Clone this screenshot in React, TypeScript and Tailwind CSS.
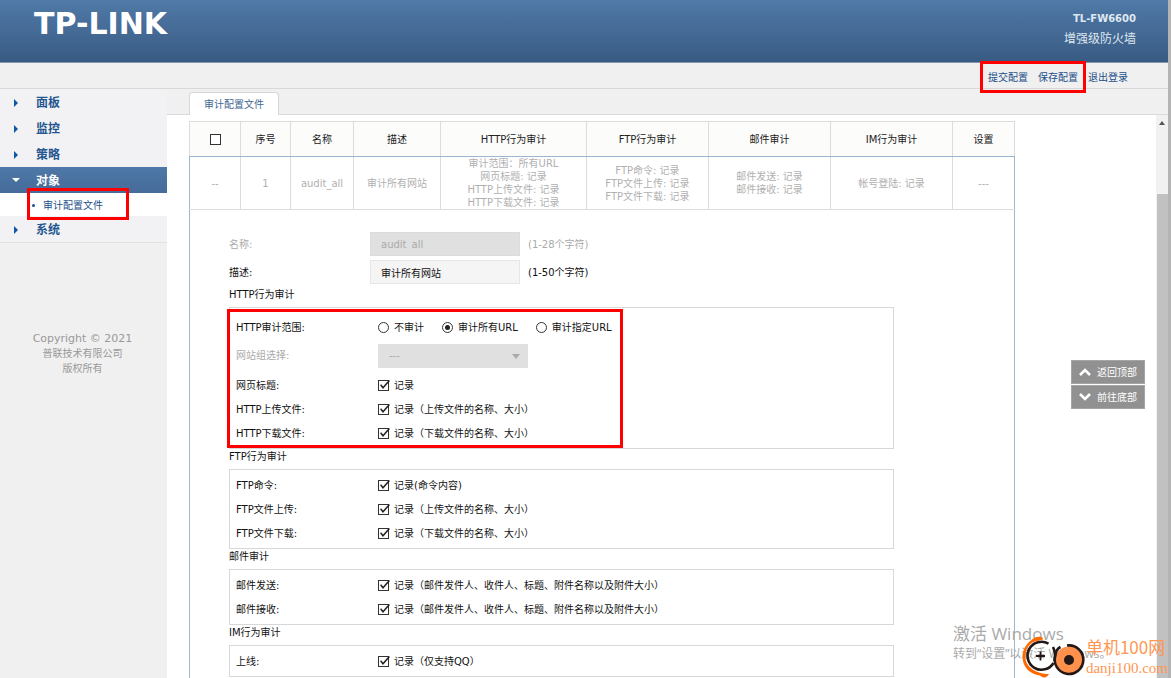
import React, { useState } from 'react';

interface Row {
  id: string;
  label: string;
  text: string;
}

const httpRows: Row[] = [
  { id: 'title', label: '网页标题:', text: '记录' },
  { id: 'http-up', label: 'HTTP上传文件:', text: '记录（上传文件的名称、大小）' },
  { id: 'http-down', label: 'HTTP下载文件:', text: '记录（下载文件的名称、大小）' },
];

const ftpRows: Row[] = [
  { id: 'ftp-cmd', label: 'FTP命令:', text: '记录(命令内容)' },
  { id: 'ftp-up', label: 'FTP文件上传:', text: '记录（上传文件的名称、大小）' },
  { id: 'ftp-down', label: 'FTP文件下载:', text: '记录（下载文件的名称、大小）' },
];

const mailRows: Row[] = [
  { id: 'mail-send', label: '邮件发送:', text: '记录（邮件发件人、收件人、标题、附件名称以及附件大小）' },
  { id: 'mail-recv', label: '邮件接收:', text: '记录（邮件发件人、收件人、标题、附件名称以及附件大小）' },
];

const imRows: Row[] = [{ id: 'im-online', label: '上线:', text: '记录（仅支持QQ）' }];

const scopes = ['不审计', '审计所有URL', '审计指定URL'];

const Checkbox: React.FC<{ id: string; checked: boolean; onChange: () => void; label?: string }> = ({ id, checked, onChange, label }) => (
  <span className="relative inline-flex size-[11px] shrink-0">
    <input id={id} type="checkbox" checked={checked} onChange={onChange} aria-label={label} className="appearance-none size-[11px] border border-[#333] bg-white" />
    {checked && (
      <svg viewBox="0 0 13 12" className="absolute left-0 -top-px w-[13px] h-3 pointer-events-none" fill="none" stroke="#222" strokeWidth="1.5">
        <path d="M2.600 5.800 L5 8.800 L11.400 1.600" />
      </svg>
    )}
  </span>
);

const CheckRow: React.FC<{ row: Row }> = ({ row }) => {
  const [checked, setChecked] = useState(true);
  return (
    <div className="flex items-center h-6">
      <label htmlFor={row.id} className="w-[142px] shrink-0">{row.label}</label>
      <Checkbox id={row.id} checked={checked} onChange={() => setChecked(!checked)} />
      <span className="ml-[5px]">{row.text}</span>
    </div>
  );
};

const Section: React.FC<{ title: string; rows: Row[]; children?: React.ReactNode }> = ({ title, rows, children }) => (
  <section>
    <h3 className="h-5 leading-4">{title}</h3>
    <div className="relative border border-[#d8d8d8] px-[6px] py-[3px]">
      {children}
      {rows.map(r => <CheckRow key={r.id} row={r} />)}
    </div>
  </section>
);

const NavItem: React.FC<{ text: string; open?: boolean }> = ({ text, open }) => (
  <a href="#" className={`flex items-center h-[26px] pt-[2px] pl-3 text-xs font-bold ${open ? 'bg-linear-to-b from-[#4e78a8] to-[#456b99] text-white' : 'bg-[#f2f2f4] text-[#24568f]'}`}>
    <svg viewBox="0 0 8 8" className="size-2 mr-4" fill={open ? '#fff' : '#0d58a6'}>
      {open ? <path d="M0 1h8L4 5z" /> : <path d="M2 0v8l4-4z" />}
    </svg>
    {text}
  </a>
);

const Th: React.FC<{ children: React.ReactNode }> = ({ children }) => (
  <th className="h-[35px] border border-[#dcdcdc] border-b-[#9db6d0] bg-[#fcfcfb] font-normal text-[#222]">{children}</th>
);

const Td: React.FC<{ children: React.ReactNode }> = ({ children }) => (
  <td className="h-[53px] border border-[#dcdcdc] first:border-l-[#9db6d0] last:border-r-[#9db6d0] text-center leading-[13px]">{children}</td>
);

const App: React.FC = () => {
  const [scope, setScope] = useState(1);
  const [all, setAll] = useState(false);
  const [desc, setDesc] = useState('审计所有网站');

  return (
    <div className="h-screen flex flex-col overflow-hidden relative bg-white border-r-[3px] border-[#b4b4b4] text-[10px] text-[#111] font-['DejaVu_Sans','Noto_Sans_CJK_SC',sans-serif]">
      <header className="h-[63px] shrink-0 flex justify-between pl-[34px] pr-8 bg-linear-to-b from-[#517aa8] to-[#385b83] border-b border-[#8195ac] text-white">
        <div className="text-[30px] leading-[48px] font-bold">TP-LINK</div>
        <div className="pt-[9px] text-right text-[#dfe8f1]">
          <div className="font-bold leading-5">TL-FW6600</div>
          <div className="text-xs leading-5">增强级防火墙</div>
        </div>
      </header>

      <div className="h-[26px] shrink-0 flex justify-end items-center pr-10 bg-[#f0f0f0] border-b border-[#d8d8d8] text-[#1c4f8a]">
        <div className="relative flex gap-[10px] pt-1 mr-[10px]">
          <a href="#">提交配置</a>
          <a href="#">保存配置</a>
          <div className="absolute z-10 -left-2 -right-2 -top-[5px] h-8 border-3 border-[#f00] pointer-events-none" />
        </div>
        <a href="#" className="pt-1">退出登录</a>
      </div>

      <div className="flex-1 min-h-0 flex">
        <aside className="w-[167px] shrink-0 bg-[#f0f0f0]">
          <nav className="border-b border-[#e2e2e2]">
            <NavItem text="面板" />
            <NavItem text="监控" />
            <NavItem text="策略" />
            <NavItem text="对象" open />
            <div className="relative bg-white h-[23px] flex items-center pl-8 pt-px">
              <span className="size-[3px] rounded-full bg-[#1c4f8a] mr-2" />
              <a href="#" className="text-[#1c4f8a]">审计配置文件</a>
              <div className="absolute left-[27px] -top-[5px] w-[102px] h-8 border-3 border-[#f00] pointer-events-none" />
            </div>
            <NavItem text="系统" />
          </nav>
          <div className="mt-[88px] pr-[2px] text-center text-[#999] leading-[15px]">
            <p className="text-[11px]">Copyright © 2021</p>
            <p>普联技术有限公司</p>
            <p>版权所有</p>
          </div>
        </aside>

        <main className="relative flex-1 min-w-0 flex flex-col">
          <div className="h-[26px] shrink-0 flex items-end pl-[22px] bg-[#f0f0f0] border-b border-[#dadada]">
            <button className="h-[23px] w-[90px] -mb-px rounded-t border border-b-0 border-[#d6d6d6] bg-white text-[#3f6690]">审计配置文件</button>
          </div>

          <div className="flex-1 min-h-0 flex">
            <div className="flex-1 min-w-0 pl-[22px] pt-[6px] overflow-hidden">
              <div className="max-w-[826px]">
                <table className="w-full table-fixed border-collapse text-[#b0b0b0]">
                  <colgroup>
                    <col className="w-[51px]" />
                    <col className="w-[50px]" />
                    <col className="w-[63px]" />
                    <col className="w-[87px]" />
                    <col className="w-[146px]" />
                    <col className="w-[122px]" />
                    <col className="w-[122px]" />
                    <col className="w-[122px]" />
                    <col className="w-[62px]" />
                  </colgroup>
                  <thead>
                    <tr>
                      <Th><span className="flex justify-center"><Checkbox id="all" label="全选" checked={all} onChange={() => setAll(!all)} /></span></Th>
                      <Th>序号</Th>
                      <Th>名称</Th>
                      <Th>描述</Th>
                      <Th>HTTP行为审计</Th>
                      <Th>FTP行为审计</Th>
                      <Th>邮件审计</Th>
                      <Th>IM行为审计</Th>
                      <Th>设置</Th>
                    </tr>
                  </thead>
                  <tbody>
                    <tr>
                      <Td>--</Td>
                      <Td>1</Td>
                      <Td>audit_all</Td>
                      <Td>审计所有网站</Td>
                      <Td>审计范围：所有URL<br />网页标题: 记录<br />HTTP上传文件: 记录<br />HTTP下载文件: 记录</Td>
                      <Td>FTP命令: 记录<br />FTP文件上传: 记录<br />FTP文件下载: 记录</Td>
                      <Td>邮件发送: 记录<br />邮件接收: 记录</Td>
                      <Td>帐号登陆: 记录</Td>
                      <Td>---</Td>
                    </tr>
                  </tbody>
                </table>

                <form className="border-x border-[#9db6d0] pl-[39px] pr-[120px] pt-[22px] pb-10">
                  <div className="flex items-center h-6 mb-1 text-[#aaa]">
                    <label htmlFor="name" className="w-[141px]">名称:</label>
                    <input id="name" disabled value="audit_all" className="w-[150px] h-6 px-[10px] leading-4 bg-[#e0e0e0] border border-[#dcdcdc]" />
                    <span className="ml-2">(1-28个字符)</span>
                  </div>
                  <div className="flex items-center h-6 mb-[3px]">
                    <label htmlFor="desc" className="w-[141px]">描述:</label>
                    <input id="desc" value={desc} onChange={e => setDesc(e.target.value)} className="w-[150px] h-6 px-[10px] bg-[#f5f5f5] border border-[#e6e6e6]" />
                    <span className="ml-2">(1-50个字符)</span>
                  </div>

                  <Section title="HTTP行为审计" rows={httpRows}>
                    <div className="flex items-center h-[33px]" role="radiogroup" aria-label="HTTP审计范围">
                      <span className="w-[142px] shrink-0">HTTP审计范围:</span>
                      {scopes.map((s, i) => (
                        <label key={s} className="flex items-center mr-[18px]">
                          <span className="relative flex size-[11px] mr-[5px]">
                            <input type="radio" name="scope" checked={scope === i} onChange={() => setScope(i)} className="appearance-none size-[11px] rounded-full border border-[#333] bg-white" />
                            {scope === i && <span className="absolute inset-[3px] rounded-full bg-[#222]" />}
                          </span>
                          {s}
                        </label>
                      ))}
                    </div>
                    <div className="flex h-[29px] text-[#aaa] leading-6">
                      <label htmlFor="group" className="w-[142px] shrink-0">网站组选择:</label>
                      <div className="relative h-6">
                        <select id="group" disabled className="appearance-none w-[150px] h-6 px-[11px] bg-[#e0e0e0] text-[#aaa] opacity-100">
                          <option>---</option>
                        </select>
                        <svg viewBox="0 0 8 5" className="absolute right-2 top-[10px] w-2 h-[5px] pointer-events-none" fill="#aaa"><path d="M0 0h8L4 5z" /></svg>
                      </div>
                    </div>
                    <div className="absolute -left-[3px] top-px w-[396px] h-[139px] border-3 border-[#f00] pointer-events-none" />
                  </Section>
                  <Section title="FTP行为审计" rows={ftpRows} />
                  <Section title="邮件审计" rows={mailRows} />
                  <Section title="IM行为审计" rows={imRows} />
                </form>
              </div>
            </div>

            {/* scrollbar */}
            <div className="w-3 shrink-0 bg-[#f1f1f1] flex flex-col items-center pt-[6px]">
              <svg viewBox="0 0 6 4" className="w-[6px] h-1" fill="#555"><path d="M0 4h6L3 0z" /></svg>
              <div className="mt-[69px] flex-1 w-[11px] bg-[#c1c1c1]" />
            </div>
          </div>

          <div className="absolute right-[23px] top-[271px] flex flex-col gap-px text-white">
            <button className="flex items-center justify-center gap-[6px] w-[74px] h-6 bg-[#919191] border border-[#a5a5a5]">
              <svg viewBox="0 0 12 8" className="w-3 h-2" fill="none" stroke="#fff" strokeWidth="2.6"><path d="M1 7L6 2L11 7" /></svg>
              返回顶部
            </button>
            <button className="flex items-center justify-center gap-[6px] w-[74px] h-6 bg-[#919191] border border-[#a5a5a5]">
              <svg viewBox="0 0 12 8" className="w-3 h-2" fill="none" stroke="#fff" strokeWidth="2.6"><path d="M1 1L6 6L11 1" /></svg>
              前往底部
            </button>
          </div>
        </main>
      </div>

      <div className="absolute left-[953px] bottom-[15px] text-[#aaa] pointer-events-none font-['Open_Sans','Noto_Sans_CJK_SC',sans-serif]">
        <div className="text-[17px] leading-5">激活 Windows</div>
        <div className="text-xs leading-[19px]">转到“设置”以激活 Windows。</div>
      </div>

      <div className="absolute right-0 bottom-0 flex items-end text-[#ff9652]">
        <svg viewBox="0 0 64 42" className="w-16 h-[42px]" fill="none">
          <path d="M20 1.200C8 1 .6 11 .6 21C.6 31 8 38.500 18 39.500C21 42.500 25 42 27 38C14 38 3.400 31 3.400 21C3.400 12 8 6 16 4.500L21 3.500Z" fill="#ff6a00" />
          <path d="M9 5C12 0 19 -.5 21 2.500Q20 4 17 4.500Z" fill="#ff6a00" />
          <path d="M26.500 7.600A14 14 0 1 0 31.500 27" stroke="#231815" strokeWidth="2.600" />
          <path d="M31 11Q34 17 32.500 25" stroke="#231815" strokeWidth="2.600" />
          <path d="M18.500 15.500v9M14 20h9" stroke="#231815" strokeWidth="1.800" />
          <circle cx="47" cy="24" r="13.500" fill="#ff914d" />
          <path d="M45 9.500A14.300 14.300 0 1 1 33.500 19Q34 13 38.500 11" stroke="#231815" strokeWidth="2.600" />
          <circle cx="47" cy="24" r="5" fill="#231815" />
        </svg>
        <div className="leading-[18px]">
          <div className="text-[17px] leading-[22px] font-['Noto_Sans_CJK_SC',sans-serif]">单机100网</div>
          <div className="text-[15px] leading-5 font-['Liberation_Serif',serif]">danji100.com</div>
        </div>
      </div>
    </div>
  );
};

export default App;
